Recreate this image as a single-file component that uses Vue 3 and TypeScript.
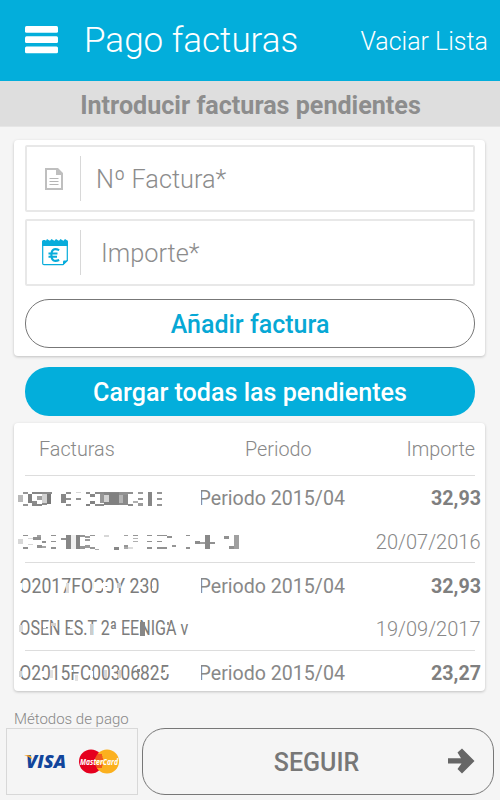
<script setup lang="ts">
type Block = [x: number, y: number, w: number, h: number, shade: number]

interface Invoice {
  code?: string
  codeWidth?: number
  marks: Block[]
  period: string
  amount: string
  holder?: string
  holderWidth?: number
  holderMarks?: Block[]
  date?: string
}

const G = 136

// Redaction mosaics: blocks are in thirds of a pixel, from the row's top left corner.
const invoices: Invoice[] = [
  {
    marks: [
      [24, 46, 15, 20, 185], [39, 36, 14, 6, 150], [39, 72, 14, 5, 150],
      [54, 43, 13, 27, 130], [67, 64, 15, 8, 140], [67, 36, 28, 6, 135], [67, 71, 28, 6, 135],
      [82, 48, 15, 11, 160], [97, 42, 13, 28, 210], [97, 36, 28, 6, 140], [110, 42, 14, 31, 120], [97, 70, 14, 6, 140],
      [153, 43, 15, 27, 135], [168, 36, 14, 6, 145], [168, 53, 14, 6, 145], [168, 72, 14, 5, 145],
      [197, 36, 15, 4, 215], [197, 53, 15, 6, 145],
      [227, 36, 14, 6, 140], [241, 42, 14, 8, 135], [227, 71, 14, 6, 130], [241, 64, 14, 9, 130], [255, 36, 28, 6, 140], [255, 71, 28, 6, 140],
      [269, 43, 13, 27, 150], [282, 45, 15, 22, 210], [282, 37, 45, 8, 135], [282, 67, 45, 9, 130], [297, 40, 29, 32, 128],
      [326, 44, 14, 24, 180], [340, 42, 15, 29, 138], [326, 37, 28, 7, 145], [326, 68, 28, 8, 138],
      [355, 36, 14, 6, 145], [355, 72, 14, 5, 140], [369, 62, 15, 7, 175], [384, 36, 14, 6, 155], [384, 53, 14, 6, 150], [384, 70, 14, 7, 155],
      [414, 36, 12, 41, 135], [441, 36, 14, 6, 150], [441, 53, 14, 6, 150], [441, 71, 14, 6, 150],
    ],
    period: 'Periodo 2015/04',
    amount: '32,93',
    holderMarks: [
      [24, 48, 15, 15, 215], [39, 35, 14, 4, 145], [39, 73, 14, 4, 145], [53, 44, 15, 4, 220], [53, 62, 15, 4, 215],
      [68, 41, 26, 10, 145], [82, 35, 12, 8, 160], [82, 67, 13, 7, 145], [96, 55, 13, 5, 145], [96, 70, 13, 5, 165],
      [124, 35, 14, 4, 145], [124, 53, 14, 4, 145], [124, 73, 14, 4, 145], [153, 45, 15, 6, 145],
      [168, 35, 14, 42, 135], [182, 35, 15, 42, 240], [197, 35, 14, 42, 132], [211, 35, 14, 6, 150], [211, 70, 14, 7, 150],
      [225, 38, 14, 8, 155], [225, 48, 14, 7, 155], [225, 67, 14, 7, 155], [239, 73, 15, 4, 150], [239, 35, 15, 4, 150], [254, 77, 14, 5, 170],
      [282, 36, 15, 5, 215], [312, 71, 14, 10, 135], [341, 35, 14, 4, 160], [341, 66, 14, 6, 150], [341, 73, 14, 4, 170], [355, 73, 13, 4, 220],
      [368, 35, 15, 4, 150], [368, 44, 15, 5, 180], [368, 53, 15, 5, 175],
      [412, 35, 14, 4, 145], [412, 53, 14, 4, 145], [412, 73, 14, 4, 145],
      [441, 35, 29, 4, 145], [441, 53, 14, 4, 145], [441, 73, 29, 4, 145], [470, 38, 15, 6, 145], [485, 67, 14, 6, 150],
      [527, 35, 14, 4, 145], [527, 73, 14, 4, 145], [555, 53, 15, 10, 140], [570, 56, 15, 8, 160], [585, 36, 14, 41, 137], [599, 56, 15, 8, 145],
      [643, 38, 14, 10, 145], [657, 69, 15, 8, 145], [672, 35, 14, 42, 160],
    ],
    date: '20/07/2016',
  },
  {
    code: 'O2017FOC0Y 230',
    codeWidth: 140,
    marks: [
      [20, 46, 16, 20, 255], [105, 46, 10, 20, 255], [168, 44, 8, 32, 220], [252, 43, 22, 25, 255],
      [279, 42, 18, 11, 255], [279, 58, 18, 12, 255], [320, 46, 14, 15, 205], [426, 42, 8, 11, 255], [426, 59, 8, 11, 255],
    ],
    period: 'Periodo 2015/04',
    amount: '32,93',
    holder: 'OSEN ES.T 2ª EENIGA v',
    holderWidth: 169,
    holderMarks: [
      [26, 46, 12, 20, 220], [99, 42, 8, 11, 255], [99, 59, 8, 11, 255], [123, 40, 14, 8, 210],
      [181, 42, 10, 11, 255], [240, 42, 8, 32, 205], [325, 40, 10, 13, 255], [325, 59, 10, 12, 255], [391, 37, 14, 40, 135], [470, 35, 8, 10, 155],
    ],
    date: '19/09/2017',
  },
  {
    code: 'O2015FC00306825',
    codeWidth: 150,
    marks: [
      [27, 47, 9, 18, 210], [94, 47, 12, 20, 255], [121, 46, 9, 22, 225], [178, 44, 10, 8, 255],
      [195, 59, 8, 18, 225], [240, 47, 10, 20, 255], [282, 44, 8, 24, 215], [325, 44, 8, 25, 210], [382, 43, 8, 8, G], [466, 43, 14, 14, 255],
    ],
    period: 'Periodo 2015/04',
    amount: '23,27',
  },
]

const grey = (n: number) => `rgb(${n},${n},${n})`
</script>

<template>
  <div class="screen">
    <header class="bar">
      <svg class="menu" viewBox="0 0 33 28" width="33" height="28">
        <rect width="33" height="6.7" rx="1.5" y="0" />
        <rect width="33" height="6.7" rx="1.5" y="10.3" />
        <rect width="33" height="6.7" rx="1.5" y="20.6" />
      </svg>
      <h1>Pago facturas</h1>
      <span class="clear">Vaciar Lista</span>
    </header>
    <div class="subtitle">Introducir facturas pendientes</div>

    <section class="card form">
      <div class="field">
        <div class="icon">
          <svg viewBox="0 0 18 22" width="18" height="22">
            <path d="M0 0H13L18 5V22H0ZM2 2V20H16V7H11V2Z" fill="#bfbfbf" fill-rule="evenodd" />
            <path d="M4.5 10.5H13.5M4.5 13.5H13.5M4.5 16.5H13.5" stroke="#b5b5b5" />
          </svg>
        </div>
        <span class="hint">Nº Factura*</span>
      </div>
      <div class="field second">
        <div class="icon">
          <svg viewBox="0 0 26 28" width="26" height="28">
            <path d="M.7 7V25.5Q.7 26.7 2 26.7H21L25.3 22.5V7" fill="#fff" stroke="#07acdb" stroke-width="1.2" />
            <path d="M0 3.5Q0 2 1.5 2H3L4 2.8L5 1L6.5 2L8 2.8L9.5 1L11 2L12.5 2.8L14 1L15.5 2L17 2.8L18.5 1L20 2L21.5 2.8L23 1L24.5 2Q26 2.2 26 3.5V8H0Z" fill="#07acdb" />
            <path d="M21 27V23.7Q21 22.5 22.3 22.5H26Z" fill="#07acdb" />
            <path d="M17.2 12.1Q9.5 8.7 9.4 17Q9.5 25.2 17.2 22M6.5 15.5H15.5M6.5 18.7H15" fill="none" stroke="#07acdb" stroke-width="2.1" />
          </svg>
        </div>
        <span class="hint">Importe*</span>
      </div>
      <button class="outline">Añadir factura</button>
    </section>

    <button class="load">Cargar todas las pendientes</button>

    <section class="card list">
      <div class="head"><span>Facturas</span><span>Periodo</span><span>Importe</span></div>
      <div v-for="(inv, i) in invoices" :key="i" class="invoice">
        <div class="row">
          <svg class="mosaic" viewBox="0 0 555 116" width="185" height="38.67" shape-rendering="crispEdges">
            <text v-if="inv.code" x="28" y="76" :textLength="(inv.codeWidth ?? 0) * 3" lengthAdjust="spacingAndGlyphs" class="code">{{ inv.code }}</text>
            <rect v-for="(m, k) in inv.marks" :key="k" :x="m[0]" :y="m[1]" :width="m[2]" :height="m[3]" :fill="grey(m[4])" />
          </svg>
          <span class="period">{{ inv.period }}</span>
          <b>{{ inv.amount }}</b>
        </div>
        <div v-if="inv.date" class="row lower">
          <svg class="mosaic" viewBox="0 0 720 116" width="240" height="38.67" shape-rendering="crispEdges">
            <text v-if="inv.holder" x="28" y="76" :textLength="(inv.holderWidth ?? 0) * 3" lengthAdjust="spacingAndGlyphs" class="code">{{ inv.holder }}</text>
            <rect v-for="(m, k) in inv.holderMarks" :key="k" :x="m[0]" :y="m[1]" :width="m[2]" :height="m[3]" :fill="grey(m[4])" />
          </svg>
          <span class="date">{{ inv.date }}</span>
        </div>
      </div>
    </section>

    <footer>
      <div class="methods">Métodos de pago</div>
      <div class="actions">
        <div class="cards">
          <svg viewBox="0 0 130 65" width="130" height="65">
            <text x="19" y="38.5" textLength="40" lengthAdjust="spacingAndGlyphs" class="visa">VISA</text>
            <path d="M17 26.2H22Q24 26.4 24.5 28.5L24.8 30.3Q22 27.4 17 26.2Z" fill="#f5a11a" />
            <circle cx="84" cy="32.5" r="12" fill="#e5001e" />
            <circle cx="100" cy="32.5" r="12" fill="#fbb01e" />
            <path d="M89 26H95M88.5 28H95.5M88.5 30H96M88.5 36H95.5M89 38H95" stroke="#e5001e" />
            <text x="73" y="35.7" textLength="38" lengthAdjust="spacingAndGlyphs" class="master">MasterCard</text>
          </svg>
        </div>
        <button class="next">
          <span>SEGUIR</span>
          <svg viewBox="0 0 27 26" width="27" height="26">
            <path d="M0 10.2H13L9.5 4.5L14 .5L26.5 13L14 25.5L9.5 21L13.5 15.5H0Z" fill="#666" />
          </svg>
        </button>
      </div>
    </footer>
  </div>
</template>

<style>
body { margin: 0; background: #f5f5f5; }
</style>

<style scoped>
* { box-sizing: border-box; }
.screen { width: 500px; height: 800px; overflow: hidden; background: #f5f5f5; font-family: Roboto, "Liberation Sans", sans-serif; color: #888; display: flex; flex-direction: column; }
.bar { height: 81px; flex: none; background: #03aedb; color: #fff; display: flex; align-items: center; padding: 0 12px 0 25px; }
.menu { fill: #fff; margin-top: -2px; }
h1 { margin: 0 0 0 26px; font-size: 35px; font-weight: 300; line-height: 44px; white-space: nowrap; }
.clear { margin-left: auto; font-size: 25px; font-weight: 300; white-space: nowrap; padding-top: 1px; }
.subtitle { height: 46px; flex: none; background: #dedede; border-bottom: 1px solid #e6e6e6; color: #8d8d8d; font-size: 25.1px; font-weight: 700; line-height: 49px; text-align: center; white-space: nowrap; padding-left: 1px; }
.card { background: #fff; width: 471px; flex: none; border-radius: 4px; box-shadow: 0 1px 3px rgba(0, 0, 0, .22); margin-left: 14px; }
.form { margin-top: 13px; height: 216px; padding: 5px 10px 0 11px; }
.field { height: 67px; border: 2px solid #e8e8e8; border-radius: 2px; display: flex; align-items: center; margin-bottom: 7px; }
.icon { width: 54px; height: 45px; border-right: 1px solid #d8d8d8; display: flex; align-items: center; justify-content: center; }
.hint { font-size: 25.3px; font-weight: 300; margin-left: 15px; color: #8c8c8c; padding-top: 1px; }
.second .hint { margin-left: 20px; padding-top: 2px; }
.second .icon { padding-left: 2px; }
.second .icon svg { margin-top: -2px; }
button { font-family: inherit; padding: 0; flex: none; }
.outline { display: block; width: 450px; height: 49px; margin-top: 13px; border: 1px solid #777; border-radius: 24px; background: #fff; color: #07a8d5; font-size: 25px; font-weight: 500; padding-top: 2px; }
.load { margin: 11px 0 7px 25px; width: 450px; height: 49px; border: 0; border-radius: 24px; background: #03aedb; color: #fff; font-size: 25.1px; font-weight: 500; padding-top: 2px; }
.list { height: 268px; overflow: hidden; }
.head { height: 53px; margin: 0 10px 0 11px; border-bottom: 1px solid #ddd; display: grid; grid-template-columns: 206px 1fr auto; align-items: center; padding-left: 14px; font-size: 19.8px; font-weight: 300; }
.invoice { height: 87.5px; }
.row { height: 43.5px; display: grid; grid-template-columns: 184.5px 160px 1fr; align-items: center; padding-right: 4px; font-size: 20px; }
.row b { text-align: right; font-weight: 700; font-size: 19.7px; color: #7f7f7f; padding-top: 2px; }
.mosaic { margin-left: -4px; align-self: start; margin-top: 3px; }
.row:first-child .mosaic { margin-top: 4px; }
.code { font-size: 59px; fill: #7c7c7c; font-weight: 400; }
.period { position: relative; white-space: nowrap; font-size: 19.6px; padding-top: 2px; }
.period::before { content: ""; position: absolute; left: -1px; top: 0; width: 3.2px; height: 24px; background: #fff; }
.lower { grid-template-columns: 240px 1fr; border-bottom: 1px solid #ddd; margin: 0 10px 0 11px; padding: 0; }
.lower .mosaic { margin-left: -15px; }
.date { text-align: right; font-weight: 300; margin-right: -5.5px; padding-top: 2px; }
.methods { margin: 18px 0 0 14px; font-size: 15px; font-weight: 300; height: 19px; line-height: 20px; }
.actions { display: flex; padding-left: 6px; gap: 4px; }
.cards { width: 132px; height: 67px; border: 1px solid #d8d8d8; }
.visa { font: italic 800 17px "Open Sans", sans-serif; fill: #12459b; }
.master { font: italic 700 8px "Open Sans", sans-serif; fill: #fff; }
.next { width: 352px; height: 67px; border: 1px solid #777; border-radius: 23px; background: transparent; display: grid; grid-template-columns: 1fr 27px; align-items: center; padding: 0 18px 0 44px; color: #777; font-size: 25px; font-weight: 500; }
.next span { padding-top: 2px; margin-left: -2px; }
.next svg { margin-top: -1px; }
</style>
